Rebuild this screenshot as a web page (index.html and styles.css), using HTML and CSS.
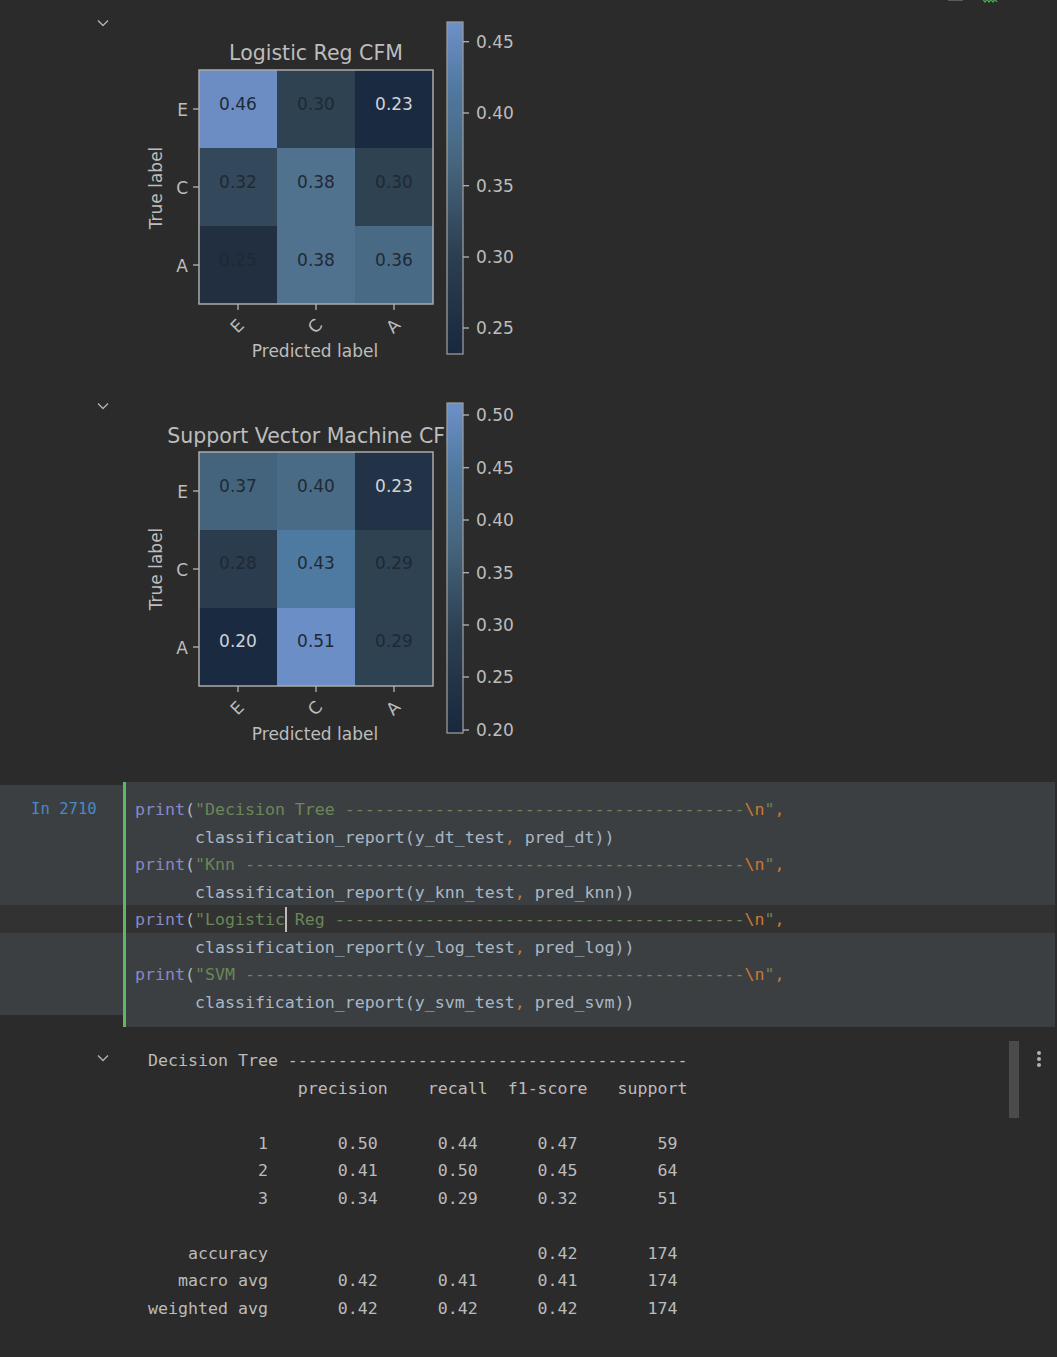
FILE: index.html
```html
<!DOCTYPE html>
<html lang="en">
<head>
<meta charset="utf-8">
<title>Notebook</title>
<link rel="stylesheet" href="styles.css">
</head>
<body>
<div class="page">
  <div class="toolbar-strip">
    <span class="strip-bar"></span>
    <svg class="strip-squiggle" width="15" height="4" viewBox="0 0 15 4"><polyline points="0,0.5 2,3 4,0.5 6,3 8,0.5 10,3 12,0.5 14,3" fill="none" stroke="#4caf50" stroke-width="1.2"/></svg>
  </div>

  <section class="out-row out-fig1">
    <div class="out-gutter"><svg class="chev" width="12" height="8" viewBox="0 0 12 8"><polyline points="1,1.5 6,6.5 11,1.5" fill="none" stroke="#afb1b3" stroke-width="1.4"/></svg></div>
    <svg class="fig" width="410" height="378" viewBox="124 4 410 378">
      <defs>
        <linearGradient id="cb1" x1="0" y1="1" x2="0" y2="0">
          <stop offset="0" stop-color="#19283d"/>
          <stop offset="0.3" stop-color="#2c3f50"/>
          <stop offset="0.58" stop-color="#46667f"/>
          <stop offset="0.8" stop-color="#5079a0"/>
          <stop offset="1" stop-color="#6e90c9"/>
        </linearGradient>
      </defs>
      <text class="title" x="316" y="60">Logistic Reg CFM</text>
      <rect x="199" y="70" width="78" height="78" fill="#6b8dc4"/>
      <rect x="277" y="70" width="78" height="78" fill="#2e4252"/>
      <rect x="355" y="70" width="78" height="78" fill="#1a2a40"/>
      <rect x="199" y="148" width="78" height="78" fill="#33485a"/>
      <rect x="277" y="148" width="78" height="78" fill="#50728e"/>
      <rect x="355" y="148" width="78" height="78" fill="#2e4252"/>
      <rect x="199" y="226" width="78" height="78" fill="#212f40"/>
      <rect x="277" y="226" width="78" height="78" fill="#50728e"/>
      <rect x="355" y="226" width="78" height="78" fill="#496a84"/>
      <text class="cell dark" x="238" y="109.5">0.46</text>
      <text class="cell dark" x="316" y="109.5">0.30</text>
      <text class="cell light" x="394" y="109.5">0.23</text>
      <text class="cell dark" x="238" y="188">0.32</text>
      <text class="cell dark" x="316" y="188">0.38</text>
      <text class="cell dark" x="394" y="188">0.30</text>
      <text class="cell dark" x="238" y="265.5">0.25</text>
      <text class="cell dark" x="316" y="265.5">0.38</text>
      <text class="cell dark" x="394" y="265.5">0.36</text>
      <rect class="spine" x="199" y="70" width="234" height="234"/>
      <g class="ticks">
        <line x1="193" y1="109" x2="199" y2="109"/>
        <line x1="193" y1="187" x2="199" y2="187"/>
        <line x1="193" y1="265" x2="199" y2="265"/>
        <line x1="238" y1="304" x2="238" y2="310"/>
        <line x1="316" y1="304" x2="316" y2="310"/>
        <line x1="394" y1="304" x2="394" y2="310"/>
      </g>
      <text class="ytl" x="188" y="116">E</text>
      <text class="ytl" x="188" y="194">C</text>
      <text class="ytl" x="188" y="272">A</text>
      <text class="xtl" transform="translate(237 326) rotate(-45)" y="6">E</text>
      <text class="xtl" transform="translate(315 326) rotate(-45)" y="6">C</text>
      <text class="xtl" transform="translate(393 326) rotate(-45)" y="6">A</text>
      <text class="axlabel" x="315" y="357">Predicted label</text>
      <text class="axlabel" transform="translate(162 188) rotate(-90)">True label</text>
      <rect class="cbar" x="447" y="22" width="16" height="332" fill="url(#cb1)"/>
      <g class="ticks">
        <line x1="463" y1="41.7" x2="469" y2="41.7"/>
        <line x1="463" y1="113" x2="469" y2="113"/>
        <line x1="463" y1="185.7" x2="469" y2="185.7"/>
        <line x1="463" y1="257" x2="469" y2="257"/>
        <line x1="463" y1="328" x2="469" y2="328"/>
      </g>
      <text class="ctl" x="476" y="48">0.45</text>
      <text class="ctl" x="476" y="119.2">0.40</text>
      <text class="ctl" x="476" y="192">0.35</text>
      <text class="ctl" x="476" y="263.2">0.30</text>
      <text class="ctl" x="476" y="334.2">0.25</text>
    </svg>
  </section>

  <section class="out-row out-fig2">
    <div class="out-gutter"><svg class="chev" width="12" height="8" viewBox="0 0 12 8"><polyline points="1,1.5 6,6.5 11,1.5" fill="none" stroke="#afb1b3" stroke-width="1.4"/></svg></div>
    <svg class="fig" width="410" height="400" viewBox="124 382 410 400">
      <defs>
        <linearGradient id="cb2" x1="0" y1="1" x2="0" y2="0">
          <stop offset="0" stop-color="#19283d"/>
          <stop offset="0.3" stop-color="#2c3f50"/>
          <stop offset="0.58" stop-color="#46667f"/>
          <stop offset="0.8" stop-color="#5079a0"/>
          <stop offset="1" stop-color="#6e90c9"/>
        </linearGradient>
      </defs>
      <text class="title" x="315" y="443">Support Vector Machine CFM</text>
      <rect x="199" y="452" width="78" height="78" fill="#44647d"/>
      <rect x="277" y="452" width="78" height="78" fill="#4a6b85"/>
      <rect x="355" y="452" width="78" height="78" fill="#233347"/>
      <rect x="199" y="530" width="78" height="78" fill="#2b3c4e"/>
      <rect x="277" y="530" width="78" height="78" fill="#4e7aa2"/>
      <rect x="355" y="530" width="78" height="78" fill="#2e4252"/>
      <rect x="199" y="608" width="78" height="78" fill="#1a2a40"/>
      <rect x="277" y="608" width="78" height="78" fill="#6c8ec6"/>
      <rect x="355" y="608" width="78" height="78" fill="#2e4252"/>
      <text class="cell dark" x="238" y="491.5">0.37</text>
      <text class="cell dark" x="316" y="491.5">0.40</text>
      <text class="cell light" x="394" y="491.5">0.23</text>
      <text class="cell dark" x="238" y="569">0.28</text>
      <text class="cell dark" x="316" y="569">0.43</text>
      <text class="cell dark" x="394" y="569">0.29</text>
      <text class="cell light" x="238" y="647">0.20</text>
      <text class="cell dark" x="316" y="647">0.51</text>
      <text class="cell dark" x="394" y="647">0.29</text>
      <rect class="spine" x="199" y="452" width="234" height="234"/>
      <g class="ticks">
        <line x1="193" y1="491" x2="199" y2="491"/>
        <line x1="193" y1="569" x2="199" y2="569"/>
        <line x1="193" y1="647" x2="199" y2="647"/>
        <line x1="238" y1="686" x2="238" y2="692"/>
        <line x1="316" y1="686" x2="316" y2="692"/>
        <line x1="394" y1="686" x2="394" y2="692"/>
      </g>
      <text class="ytl" x="188" y="498">E</text>
      <text class="ytl" x="188" y="576">C</text>
      <text class="ytl" x="188" y="654">A</text>
      <text class="xtl" transform="translate(237 708) rotate(-45)" y="6">E</text>
      <text class="xtl" transform="translate(315 708) rotate(-45)" y="6">C</text>
      <text class="xtl" transform="translate(393 708) rotate(-45)" y="6">A</text>
      <text class="axlabel" x="315" y="740">Predicted label</text>
      <text class="axlabel" transform="translate(162 569) rotate(-90)">True label</text>
      <rect class="cbar" x="447" y="403" width="16" height="330" fill="url(#cb2)"/>
      <g class="ticks">
        <line x1="463" y1="415" x2="469" y2="415"/>
        <line x1="463" y1="467.7" x2="469" y2="467.7"/>
        <line x1="463" y1="520" x2="469" y2="520"/>
        <line x1="463" y1="572.7" x2="469" y2="572.7"/>
        <line x1="463" y1="625" x2="469" y2="625"/>
        <line x1="463" y1="677" x2="469" y2="677"/>
        <line x1="463" y1="730" x2="469" y2="730"/>
      </g>
      <text class="ctl" x="476" y="421.2">0.50</text>
      <text class="ctl" x="476" y="474">0.45</text>
      <text class="ctl" x="476" y="526.2">0.40</text>
      <text class="ctl" x="476" y="579">0.35</text>
      <text class="ctl" x="476" y="631.2">0.30</text>
      <text class="ctl" x="476" y="683.2">0.25</text>
      <text class="ctl" x="476" y="736.2">0.20</text>
    </svg>
  </section>

  <section class="code-cell">
    <div class="cell-gutter">
      <div class="gline"><span class="prompt">In 2710</span></div>
      <div class="gline"></div>
      <div class="gline"></div>
      <div class="gline"></div>
      <div class="gline current"></div>
      <div class="gline"></div>
      <div class="gline"></div>
      <div class="gline"></div>
    </div>
    <div class="cell-bar"></div>
    <div class="code">
      <div class="cline"><span class="kw">print</span>(<span class="str">"Decision Tree ----------------------------------------</span><span class="esc">\n</span><span class="str">"</span><span class="punc">,</span></div>
      <div class="cline">      classification_report(y_dt_test<span class="punc">,</span> pred_dt))</div>
      <div class="cline"><span class="kw">print</span>(<span class="str">"Knn --------------------------------------------------</span><span class="esc">\n</span><span class="str">"</span><span class="punc">,</span></div>
      <div class="cline">      classification_report(y_knn_test<span class="punc">,</span> pred_knn))</div>
      <div class="cline current"><span class="kw">print</span>(<span class="str">"Logistic<span class="caret"></span> Reg -----------------------------------------</span><span class="esc">\n</span><span class="str">"</span><span class="punc">,</span></div>
      <div class="cline">      classification_report(y_log_test<span class="punc">,</span> pred_log))</div>
      <div class="cline"><span class="kw">print</span>(<span class="str">"SVM --------------------------------------------------</span><span class="esc">\n</span><span class="str">"</span><span class="punc">,</span></div>
      <div class="cline">      classification_report(y_svm_test<span class="punc">,</span> pred_svm))</div>
    </div>
  </section>

  <section class="out-row out-text">
    <div class="out-gutter"><svg class="chev" width="12" height="8" viewBox="0 0 12 8"><polyline points="1,1.5 6,6.5 11,1.5" fill="none" stroke="#afb1b3" stroke-width="1.4"/></svg></div>
    <pre class="report">Decision Tree ----------------------------------------
               precision    recall  f1-score   support

           1       0.50      0.44      0.47        59
           2       0.41      0.50      0.45        64
           3       0.34      0.29      0.32        51

    accuracy                           0.42       174
   macro avg       0.42      0.41      0.41       174
weighted avg       0.42      0.42      0.42       174</pre>
    <div class="scroll-thumb"></div>
    <div class="kebab"><span></span><span></span><span></span></div>
  </section>
</div>
</body>
</html>
```
FILE: styles.css
```css
html, body {
  margin: 0;
  padding: 0;
  background: #2b2b2b;
}
body {
  width: 1057px;
  height: 1357px;
  overflow: hidden;
  font-family: "DejaVu Sans", sans-serif;
}
.page {
  display: flex;
  flex-direction: column;
}
.toolbar-strip {
  height: 4px;
  display: flex;
  align-items: flex-start;
  overflow: hidden;
}
.strip-bar {
  display: block;
  width: 15px;
  height: 1px;
  background: #5a5a5a;
  margin-left: 948px;
}
.strip-squiggle {
  display: block;
  margin-left: 20px;
  margin-top: -1px;
}
.out-row {
  display: flex;
  align-items: flex-start;
}
.out-gutter {
  width: 124px;
  flex: none;
  display: flex;
  justify-content: flex-end;
  padding-right: 15px;
  box-sizing: border-box;
}
.chev {
  display: block;
}
.out-fig1 {
  height: 378px;
}
.out-fig1 .out-gutter {
  padding-top: 15px;
}
.out-fig2 {
  height: 400px;
}
.out-fig2 .out-gutter {
  padding-top: 20px;
}
.fig {
  display: block;
  flex: none;
  font-family: "DejaVu Sans", sans-serif;
}
.fig .title {
  font-size: 20.5px;
  fill: #bdbdbd;
  text-anchor: middle;
}
.fig .cell {
  font-size: 17px;
  text-anchor: middle;
}
.fig .cell.dark {
  fill: #1f2936;
}
.fig .cell.light {
  fill: #cfd3d8;
}
.fig .spine {
  fill: none;
  stroke: #ababab;
  stroke-width: 1.5;
}
.fig .cbar {
  stroke: #9a9a9a;
  stroke-width: 1.3;
}
.fig .ticks line {
  stroke: #b5b5b5;
  stroke-width: 1.3;
}
.fig .ytl {
  font-size: 17px;
  fill: #bdbdbd;
  text-anchor: end;
}
.fig .xtl {
  font-size: 17px;
  fill: #bdbdbd;
  text-anchor: middle;
}
.fig .axlabel {
  font-size: 17px;
  fill: #bdbdbd;
  text-anchor: middle;
}
.fig .ctl {
  font-size: 17px;
  fill: #bdbdbd;
}

/* code cell */
.code-cell {
  display: flex;
  align-items: flex-start;
  height: 245px;
  font-family: "DejaVu Sans Mono", "Liberation Mono", monospace;
  font-size: 16.6px;
}
.cell-gutter {
  width: 123px;
  flex: none;
  margin-top: 3px;
  padding-top: 10.25px;
  background: #3c3f41;
}
.gline {
  height: 27.5px;
  line-height: 27.5px;
  box-sizing: border-box;
  padding-top: 1px;
}
.gline.current {
  background: #323232;
}
.prompt {
  display: block;
  padding-left: 31px;
  font-size: 15.6px;
  color: #4a88c7;
}
.cell-bar {
  width: 3px;
  flex: none;
  height: 245px;
  background: #5fb85f;
}
.code {
  width: 929px;
  flex: none;
  height: 245px;
  box-sizing: border-box;
  padding-top: 13.25px;
  background: #3c3f41;
  color: #a9b7c6;
}
.cline {
  height: 27.5px;
  line-height: 27.5px;
  box-sizing: border-box;
  padding-top: 1px;
  padding-left: 9px;
  white-space: pre;
}
.cline.current {
  background: #323232;
}
.kw { color: #8888c6; }
.str { color: #6a8759; }
.esc { color: #cc7832; }
.punc { color: #cc7832; }
.caret {
  display: inline-block;
  width: 2px;
  height: 25px;
  margin-right: -2px;
  vertical-align: -7px;
  background: #bbbbbb;
}

/* text output */
.out-text .out-gutter {
  padding-top: 27px;
}
.report {
  flex: 1;
  margin: 0;
  padding: 20px 0 0 24px;
  font-family: "DejaVu Sans Mono", "Liberation Mono", monospace;
  font-size: 16.6px;
  line-height: 27.5px;
  color: #bbbbbb;
}
.scroll-thumb {
  width: 10px;
  height: 77px;
  flex: none;
  margin-top: 14px;
  background: #4b4b4b;
}
.kebab {
  flex: none;
  width: 4px;
  margin: 24px 16px 0 18px;
  display: flex;
  flex-direction: column;
  gap: 2px;
}
.kebab span {
  display: block;
  width: 4px;
  height: 4px;
  border-radius: 50%;
  background: #afb1b3;
}
```
